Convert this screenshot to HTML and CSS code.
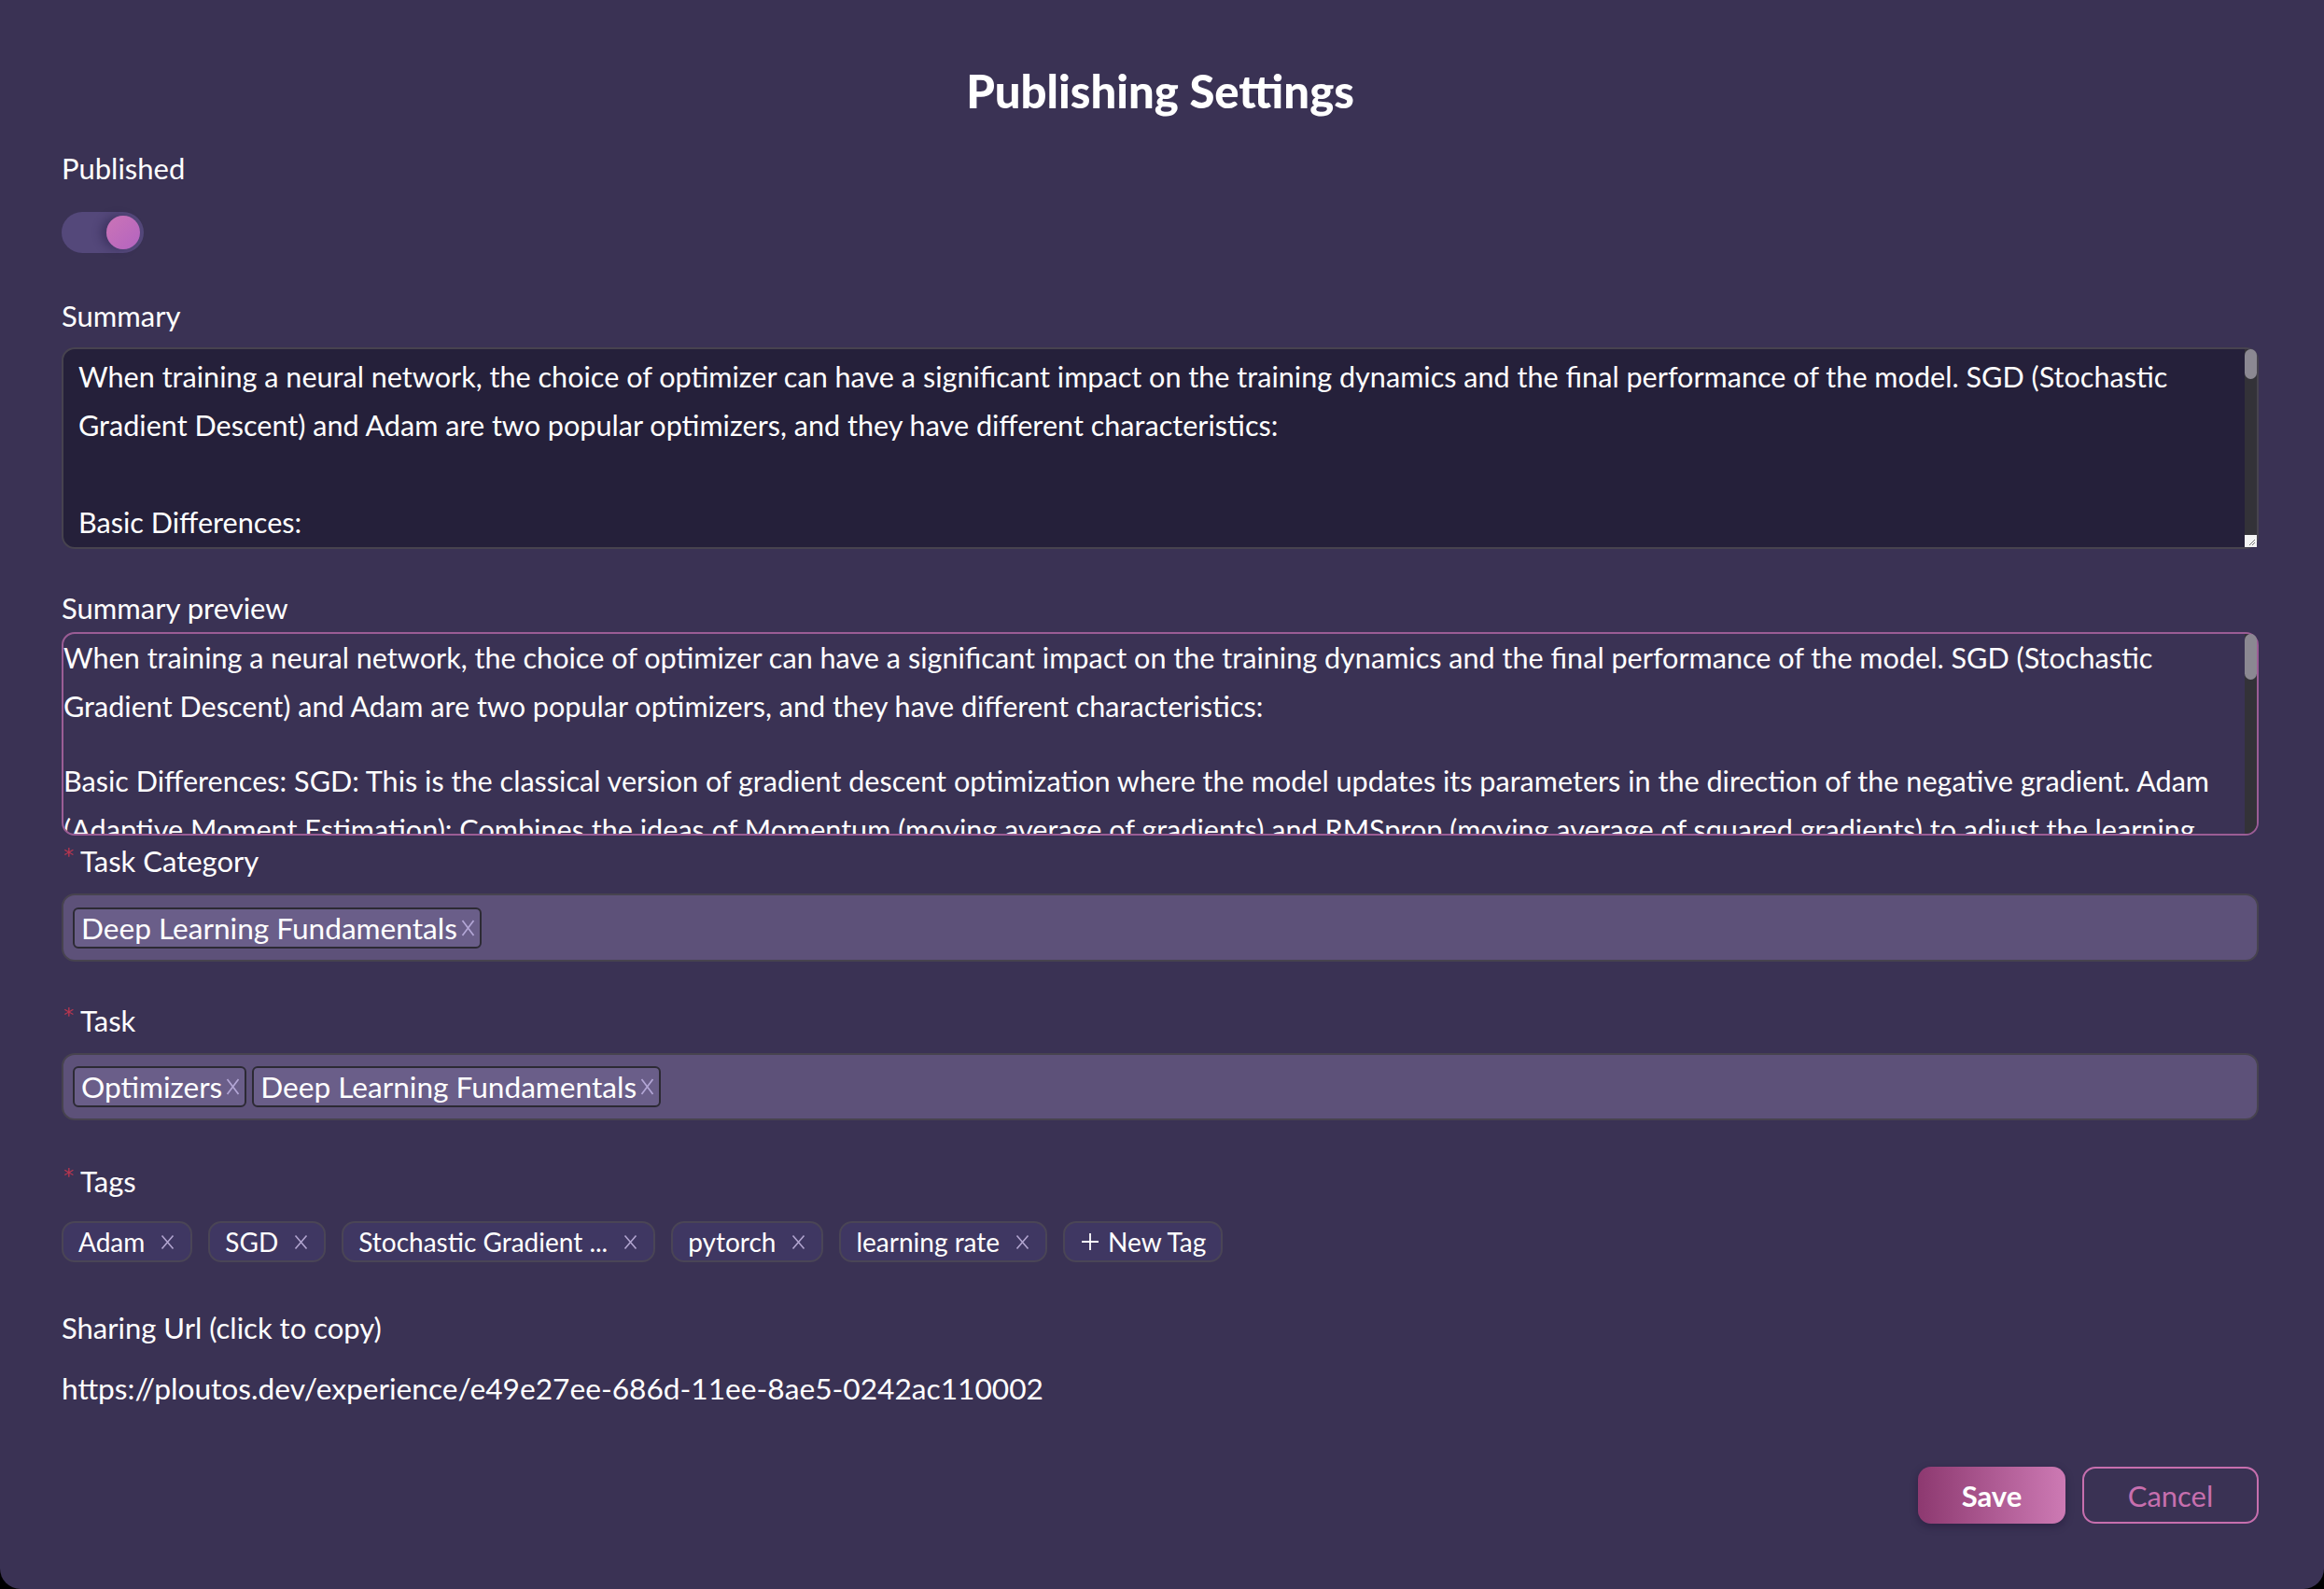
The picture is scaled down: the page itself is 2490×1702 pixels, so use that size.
FILE: index.html
```html
<!DOCTYPE html>
<html lang="en">
<head>
<meta charset="utf-8">
<title>Publishing Settings</title>
<link rel="stylesheet" href="styles.css">
</head>
<body>
<div class="dialog">
  <h1 class="title">Publishing Settings</h1>

  <div class="label l-published">Published</div>
  <div class="switch"><span class="knob"></span></div>

  <div class="label l-summary">Summary</div>
  <div class="area-wrap">
    <textarea class="summary">When training a neural network, the choice of optimizer can have a significant impact on the training dynamics and the final performance of the model. SGD (Stochastic Gradient Descent) and Adam are two popular optimizers, and they have different characteristics:

Basic Differences:
SGD: This is the classical version of gradient descent optimization where the model updates its parameters in the direction of the negative gradient.
Adam (Adaptive Moment Estimation): Combines the ideas of Momentum (moving average of gradients) and RMSprop (moving average of squared gradients) to adjust the learning rate for each parameter.</textarea>
    <div class="sbar sbar-area"><span class="thumb thumb-area"></span></div>
    <span class="grip"><svg viewBox="0 0 13 13"><path d="M11 5L5 11M11 8L8 11"/></svg></span>
  </div>

  <div class="label l-preview">Summary preview</div>
  <div class="preview-wrap">
    <div class="preview">
      <p>When training a neural network, the choice of optimizer can have a significant impact on the training dynamics and the final performance of the model. SGD (Stochastic Gradient Descent) and Adam are two popular optimizers, and they have different characteristics:</p>
      <p>Basic Differences: SGD: This is the classical version of gradient descent optimization where the model updates its parameters in the direction of the negative gradient. Adam (Adaptive Moment Estimation): Combines the ideas of Momentum (moving average of gradients) and RMSprop (moving average of squared gradients) to adjust the learning rate for each parameter.</p>
    </div>
    <div class="sbar sbar-prev"><span class="thumb thumb-prev"></span></div>
  </div>

  <div class="label req l-cat"><span class="star">*</span>Task Category</div>
  <div class="select s-cat">
    <span class="chip">Deep Learning Fundamentals<svg class="cx" viewBox="0 0 15 20"><path d="M1.5 2L13.5 18M13.5 2L1.5 18"/></svg></span>
  </div>

  <div class="label req l-task"><span class="star">*</span>Task</div>
  <div class="select s-task">
    <span class="chip">Optimizers<svg class="cx" viewBox="0 0 15 20"><path d="M1.5 2L13.5 18M13.5 2L1.5 18"/></svg></span>
    <span class="chip">Deep Learning Fundamentals<svg class="cx" viewBox="0 0 15 20"><path d="M1.5 2L13.5 18M13.5 2L1.5 18"/></svg></span>
  </div>

  <div class="label req l-tags"><span class="star">*</span>Tags</div>
  <div class="tags">
    <span class="tag">Adam<svg class="tx" viewBox="0 0 15 17"><path d="M1.5 1.5L13.5 15.5M13.5 1.5L1.5 15.5"/></svg></span>
    <span class="tag">SGD<svg class="tx" viewBox="0 0 15 17"><path d="M1.5 1.5L13.5 15.5M13.5 1.5L1.5 15.5"/></svg></span>
    <span class="tag">Stochastic Gradient ...<svg class="tx" viewBox="0 0 15 17"><path d="M1.5 1.5L13.5 15.5M13.5 1.5L1.5 15.5"/></svg></span>
    <span class="tag">pytorch<svg class="tx" viewBox="0 0 15 17"><path d="M1.5 1.5L13.5 15.5M13.5 1.5L1.5 15.5"/></svg></span>
    <span class="tag">learning rate<svg class="tx" viewBox="0 0 15 17"><path d="M1.5 1.5L13.5 15.5M13.5 1.5L1.5 15.5"/></svg></span>
    <span class="tag new"><svg class="plus" viewBox="0 0 20 20"><path d="M10 1V19M1 10H19"/></svg>New Tag</span>
  </div>

  <div class="label l-share">Sharing Url (click to copy)</div>
  <div class="url">https://ploutos.dev/experience/e49e27ee-686d-11ee-8ae5-0242ac110002</div>

  <div class="actions">
    <button class="btn save">Save</button>
    <button class="btn cancel">Cancel</button>
  </div>
</div>
</body>
</html>
```

FILE: styles.css
```css
html, body {
  margin: 0;
  padding: 0;
  background: #000;
}

.dialog {
  width: 2490px;
  height: 1702px;
  box-sizing: border-box;
  background: #3a3254;
  border-radius: 0 0 22px 22px;
  padding: 67px 70px 0 66px;
  display: flex;
  flex-direction: column;
  font-family: "Lato", "Noto Sans", sans-serif;
  color: #fff;
}

.title {
  margin: 0;
  font-size: 49px;
  line-height: 60px;
  font-weight: 900;
  text-align: center;
}

.label {
  font-size: 31px;
  line-height: 40px;
  height: 40px;
  white-space: nowrap;
}

.req {
  display: flex;
  align-items: flex-start;
}

.star {
  color: #b8364f;
  font-family: "DejaVu Sans", sans-serif;
  font-size: 22px;
  line-height: 30px;
  width: 18px;
  margin-left: 2px;
}

.l-published { margin-top: 33px; }
.l-summary { margin-top: 47px; }
.l-preview { margin-top: 43px; }
.l-cat { margin-top: 7px; }
.l-task { margin-top: 43px; }
.l-tags { margin-top: 45px; }
.l-share { margin-top: 50px; }

/* switch */
.switch {
  margin-top: 27px;
  width: 88px;
  height: 44px;
  border-radius: 22px;
  background: #54487a;
  display: flex;
  align-items: center;
  justify-content: flex-end;
  padding-right: 4px;
  box-sizing: border-box;
}

.knob {
  width: 36px;
  height: 36px;
  border-radius: 50%;
  background: linear-gradient(135deg, #cb74b6, #b364c0);
  box-shadow: -6px 0 10px rgba(40, 30, 70, 0.45);
}

/* fake scrollbars (headless hides native ones) */
.area-wrap,
.preview-wrap {
  position: relative;
}

.area-wrap { margin-top: 14px; }
.preview-wrap { margin-top: 6px; }

.sbar {
  position: absolute;
  top: 2px;
  right: 2px;
  width: 13px;
  background: #333238;
  border-top-right-radius: 12px;
}

.sbar-area { bottom: 15px; }
.sbar-prev { bottom: 2px; border-bottom-right-radius: 12px; }

.thumb {
  display: block;
  width: 13px;
  background: #8b8892;
  border-radius: 7px;
}

.thumb-area { height: 32px; }
.thumb-prev { height: 49px; }

.grip {
  position: absolute;
  right: 2px;
  bottom: 2px;
  width: 13px;
  height: 13px;
  background: #f4f4f4;
  display: flex;
}

.grip svg {
  width: 13px;
  height: 13px;
  fill: none;
  stroke: #777;
  stroke-width: 1;
}

/* summary textarea */
.summary {
  display: block;
  width: 100%;
  height: 216px;
  box-sizing: border-box;
  background: #25203a;
  color: #fff;
  border: 2px solid #47434f;
  border-radius: 14px;
  padding: 4px 29px 4px 16px;
  font-family: inherit;
  font-size: 30.6px;
  line-height: 52px;
  resize: none;
  overflow: hidden;
  outline: none;
}

/* preview */
.preview {
  height: 218px;
  box-sizing: border-box;
  border: 2px solid #9b5d95;
  border-radius: 14px;
  overflow: hidden;
  padding-right: 13px;
  font-size: 30.6px;
  line-height: 52px;
}

.preview p {
  margin: 0 0 28px;
}

/* selects */
.select {
  margin-top: 15px;
  height: 73px;
  box-sizing: border-box;
  background: #5d5179;
  border: 2px solid #47434f;
  border-radius: 14px;
  padding: 0 10px;
  display: flex;
  align-items: center;
  gap: 6px;
}

.s-task { height: 72px; }

.chip {
  height: 44px;
  box-sizing: border-box;
  display: inline-flex;
  align-items: center;
  background: #6a5e89;
  border: 2px solid #2c2a34;
  border-radius: 6px;
  padding: 0 5px 0 7px;
  font-size: 31.6px;
  white-space: nowrap;
}

.cx {
  width: 15px;
  height: 20px;
  margin-left: 4px;
  fill: none;
  stroke: #b3a6d6;
  stroke-width: 1.7;
}

/* tags */
.tags {
  margin-top: 23px;
  display: flex;
  gap: 17px;
}

.tag {
  height: 44px;
  box-sizing: border-box;
  display: inline-flex;
  align-items: center;
  background: #3f3762;
  border: 2px solid #4a4556;
  border-radius: 14px;
  padding: 0 17px 0 16px;
  font-size: 28px;
  white-space: nowrap;
}

.tx {
  width: 15px;
  height: 17px;
  margin-left: 17px;
  fill: none;
  stroke: #b1a4cf;
  stroke-width: 1.6;
}

.tag.new {
  padding: 0 16px 0 17px;
}

.plus {
  width: 20px;
  height: 20px;
  margin-right: 9px;
  fill: none;
  stroke: #fff;
  stroke-width: 1.8;
}

/* url */
.url {
  margin-top: 25px;
  font-size: 31.7px;
  line-height: 40px;
  white-space: nowrap;
}

/* buttons */
.actions {
  margin-top: 64px;
  display: flex;
  justify-content: flex-end;
  gap: 18px;
}

.btn {
  height: 61px;
  box-sizing: border-box;
  border-radius: 14px;
  font-family: inherit;
  font-size: 31px;
  cursor: pointer;
}

.save {
  width: 158px;
  border: none;
  color: #fff;
  font-weight: 700;
  background: linear-gradient(90deg, #8d3970, #cd7ab4);
  box-shadow: 0 3px 8px rgba(20, 10, 40, 0.35);
}

.cancel {
  width: 189px;
  background: transparent;
  border: 2px solid #c76fae;
  color: #c76fae;
}
```
